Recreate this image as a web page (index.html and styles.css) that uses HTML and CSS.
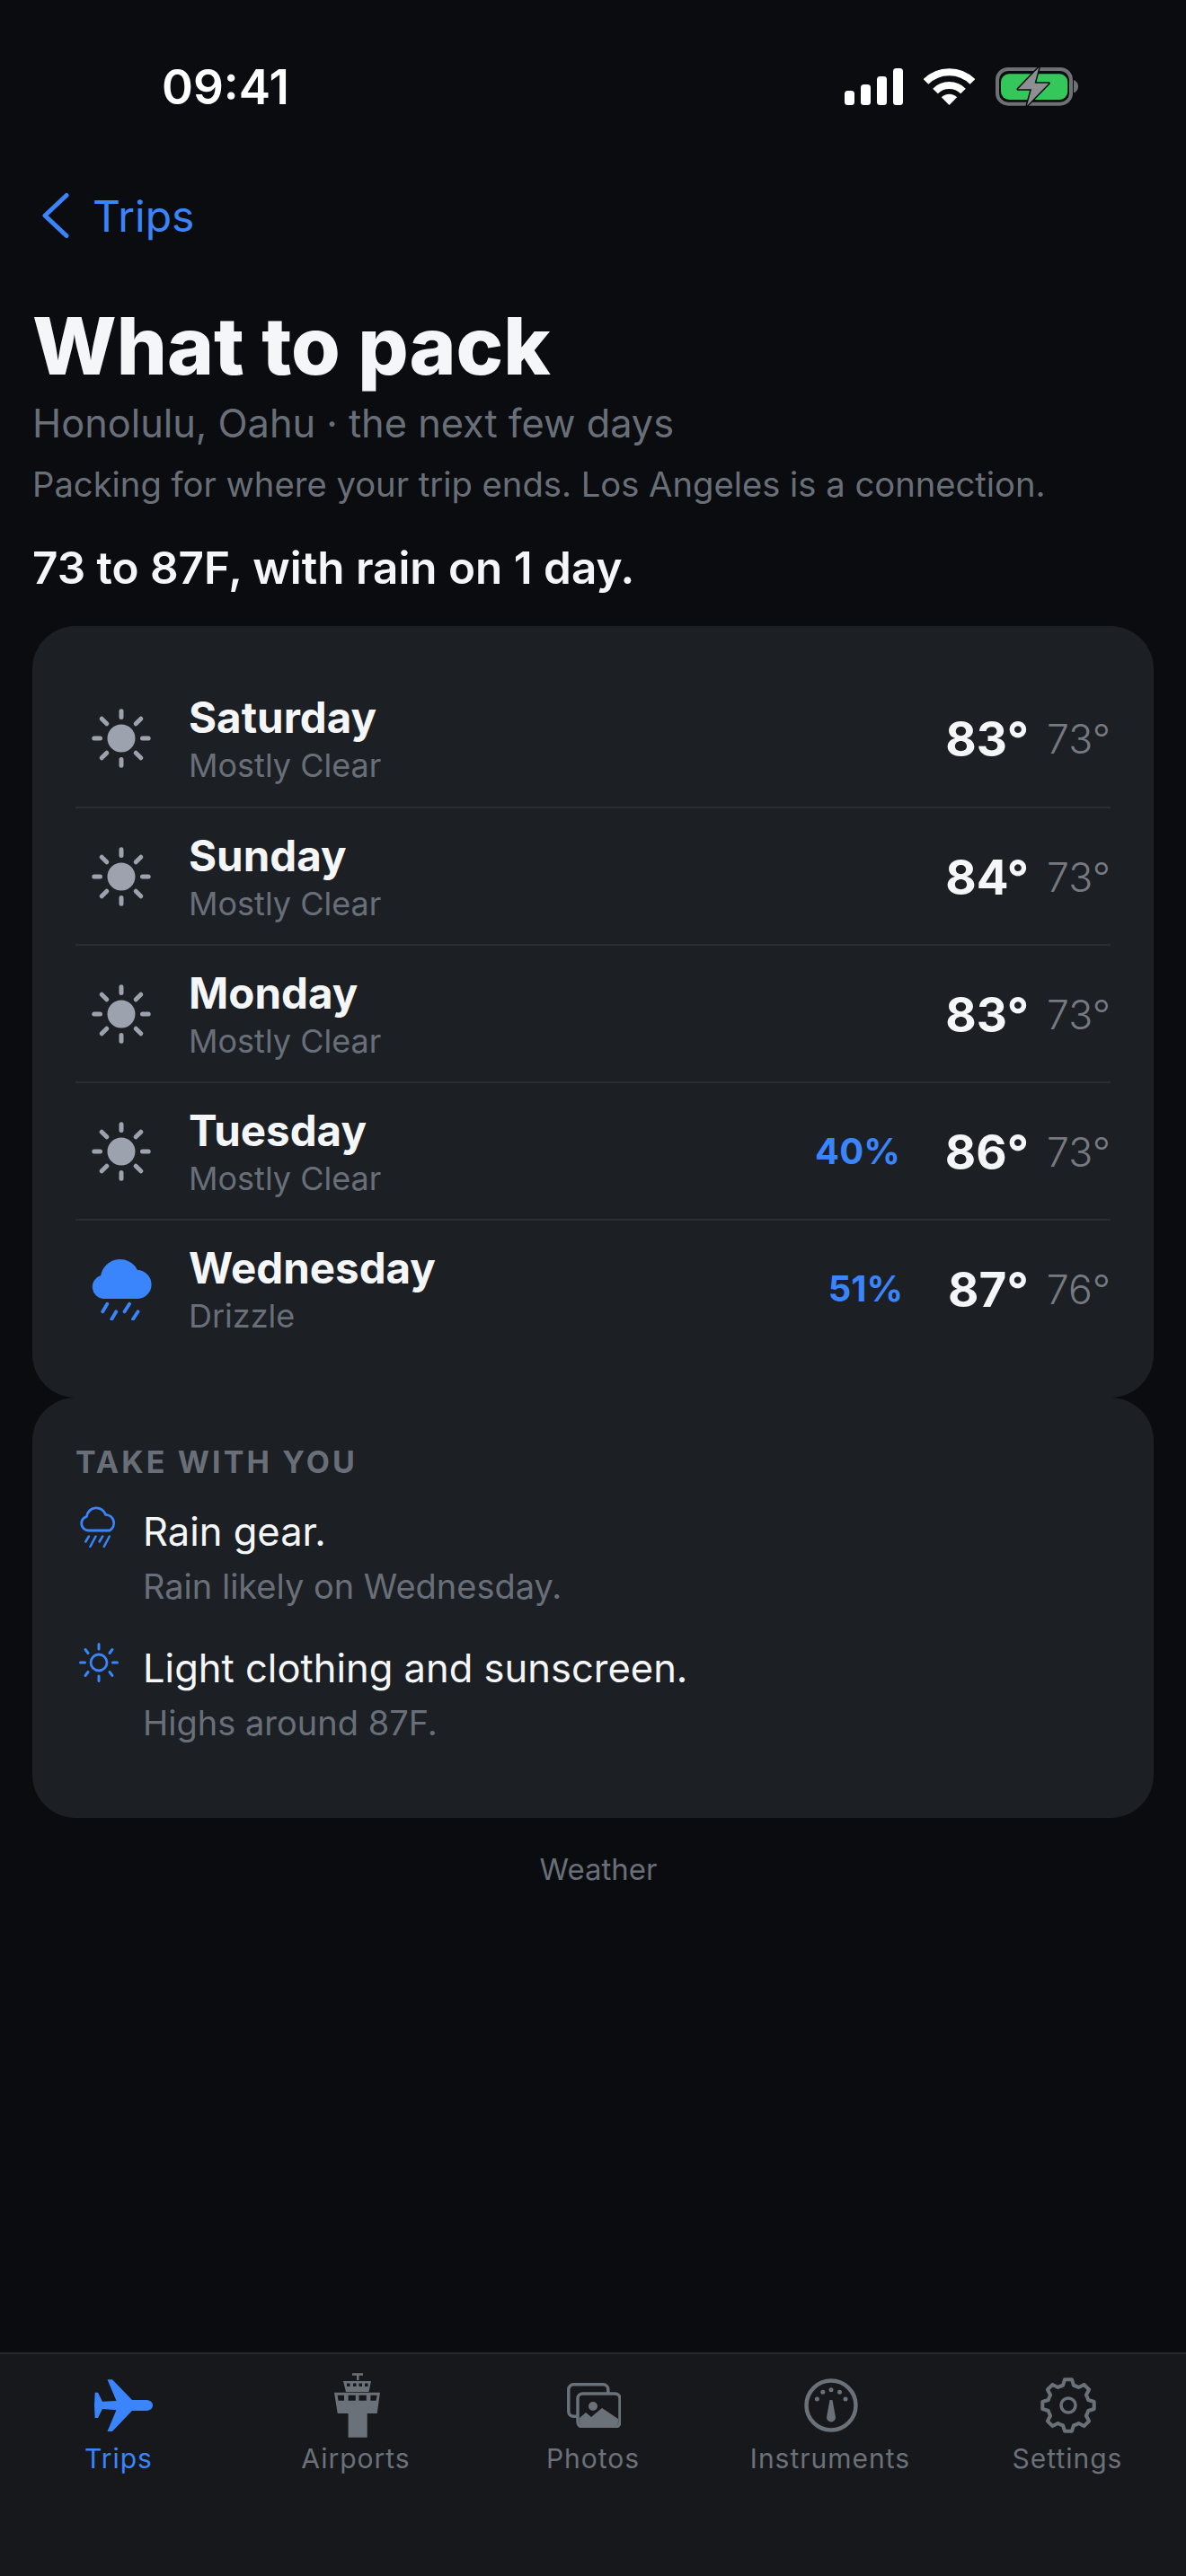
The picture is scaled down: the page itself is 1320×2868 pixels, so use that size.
FILE: index.html
```html
<!DOCTYPE html>
<html lang="en">
<head>
<meta charset="utf-8">
<title>What to pack</title>
<link rel="stylesheet" href="styles.css">
</head>
<body>
<svg class="defs" width="0" height="0" aria-hidden="true">
  <defs>
    <g id="sun">
      <circle cx="33" cy="33" r="15.5" fill="#9ca3af"/>
      <g stroke="#9ca3af" stroke-width="5" stroke-linecap="round">
        <path d="M33 2.800V9.500M33 56.500V63.200M2.800 33H9.500M56.500 33H63.200M11.200 11.200L16.800 16.800M49.200 49.200L54.800 54.800M54.800 11.200L49.200 16.800M16.800 49.200L11.200 54.800"/>
      </g>
    </g>
  </defs>
</svg>
<div class="page">
  <header class="status">
    <span class="time">09:41</span>
    <div class="status-icons">
      <svg class="sig" width="65" height="41" viewBox="0 0 65 41"><rect x="0" y="25" width="11" height="16" rx="3.5"/><rect x="18" y="18" width="11" height="23" rx="3.5"/><rect x="36" y="9" width="11" height="32" rx="3.5"/><rect x="54" y="0" width="11" height="41" rx="3.5"/></svg>
      <svg class="wifi" width="57" height="41" viewBox="0 0 57 41"><path d="M28.5 41L19.8 32.3A12.3 12.3 0 0 1 37.2 32.3Z" fill="#fff"/><path d="M13 25.5A22 22 0 0 1 44 25.5M2.5 15A36.7 36.7 0 0 1 54.5 15" fill="none" stroke="#fff" stroke-width="8"/></svg>
      <svg class="batt" width="92" height="45" viewBox="0 0 92 45"><rect x="2" y="3" width="82" height="38.7" rx="12" fill="none" stroke="#6f7073" stroke-width="4"/><rect x="6" y="8.3" width="74.3" height="28.7" rx="9" fill="#34c759"/><path d="M87 15.3C90 16 92 19 92 22.3S90 28.6 87 29.3Z" fill="#6f7073"/><path d="M48.3 1L25 25.3H40L35 43.7L59.3 18.7H43.6Z" fill="#8e8f92" stroke="#0a0c0f" stroke-width="3" stroke-linejoin="round" paint-order="stroke"/></svg>
    </div>
  </header>
  <a class="back">
    <svg width="30" height="52" viewBox="0 0 30 52"><path d="M27 3.5L3 26L27 48.500" fill="none" stroke="#3a85fb" stroke-width="5" stroke-linecap="round" stroke-linejoin="round"/></svg>
    <span>Trips</span>
  </a>
  <main class="content">
    <h1 class="title">What to pack</h1>
    <p class="place">Honolulu, Oahu · the next few days</p>
    <p class="note">Packing for where your trip ends. Los Angeles is a connection.</p>
    <p class="summary">73 to 87F, with rain on 1 day.</p>
    <section class="card forecast">
      <div class="row">
        <svg class="wx" width="66" height="66" viewBox="0 0 66 66"><use href="#sun"/></svg>
        <div class="day"><div class="name">Saturday</div><div class="cond">Mostly Clear</div></div>
        <span class="hi">83°</span><span class="lo">73°</span>
      </div>
      <div class="row">
        <svg class="wx" width="66" height="66" viewBox="0 0 66 66"><use href="#sun"/></svg>
        <div class="day"><div class="name">Sunday</div><div class="cond">Mostly Clear</div></div>
        <span class="hi">84°</span><span class="lo">73°</span>
      </div>
      <div class="row">
        <svg class="wx" width="66" height="66" viewBox="0 0 66 66"><use href="#sun"/></svg>
        <div class="day"><div class="name">Monday</div><div class="cond">Mostly Clear</div></div>
        <span class="hi">83°</span><span class="lo">73°</span>
      </div>
      <div class="row">
        <svg class="wx" width="66" height="66" viewBox="0 0 66 66"><use href="#sun"/></svg>
        <div class="day"><div class="name">Tuesday</div><div class="cond">Mostly Clear</div></div>
        <span class="pct">40%</span><span class="hi">86°</span><span class="lo">73°</span>
      </div>
      <div class="row">
        <svg class="wx wx-rain" width="70" height="70" viewBox="0 -1 70 70"><path d="M13.3 45A13.3 13.3 0 0 1 10.200 19A21.700 21.700 0 0 1 51 13.100A16 16 0 0 1 52.300 45Z" fill="#3a85fb"/><path d="M17.300 50.700L12.300 59.300M42 50.700L36.600 59.300M27.300 59.300L22.300 67.700M51.600 59.300L46 67.700" stroke="#3a85fb" stroke-width="3.800" stroke-linecap="round"/></svg>
        <div class="day"><div class="name">Wednesday</div><div class="cond">Drizzle</div></div>
        <span class="pct">51%</span><span class="hi">87°</span><span class="lo">76°</span>
      </div>
    </section>
    <section class="card take">
      <h2 class="take-h">TAKE WITH YOU</h2>
      <div class="item">
        <svg class="item-icon" width="44" height="46" viewBox="0 0 44 46"><path d="M10.500 27A8 8 0 0 1 8.500 11.300A10.800 10.800 0 0 1 29.500 9.300A9.500 9.500 0 0 1 34 27Z" fill="none" stroke="#3a85fb" stroke-width="2.800" stroke-linejoin="round"/><path d="M10.900 33.500L7.300 39.500M18.500 33.500L12.400 45M26.200 33.500L22.600 39.500M33.800 33.500L27.700 45" stroke="#3a85fb" stroke-width="2.500" stroke-linecap="round"/></svg>
        <div><div class="item-t">Rain gear.</div><div class="item-s">Rain likely on Wednesday.</div></div>
      </div>
      <div class="item">
        <svg class="item-icon" width="44" height="46" viewBox="0 0 44 46"><circle cx="22" cy="22" r="9" fill="none" stroke="#3a85fb" stroke-width="2.800"/><path d="M22 1.500V7M22 37V42.500M1.500 22H6.500M37.500 22H42.500M7 7.500L10 11.500M37 7.500L34 11.500M7 36.500L10 32.500M37 36.500L34 32.500" stroke="#3a85fb" stroke-width="3" stroke-linecap="round"/></svg>
        <div><div class="item-t">Light clothing and sunscreen.</div><div class="item-s">Highs around 87F.</div></div>
      </div>
    </section>
    <p class="source">Weather</p>
  </main>
  <nav class="tabs">
    <div class="tab active">
      <div class="tab-ico tab-plane"><svg width="65" height="58" viewBox="0 0 65 58"><path d="M65 29C65 32.500 62 35 57 35H42L20 58H14.500L24.500 34.300L9 33L4 43H.7L0 29L.7 14.700H4L9 24.700L24.500 24L14.500 .3H20L42 23H57C62 23 65 25.500 65 29Z" fill="#3a85fb"/></svg></div>
      <span>Trips</span>
    </div>
    <div class="tab">
      <div class="tab-ico"><svg width="51" height="72" viewBox="0 0 51 72"><path fill-rule="evenodd" fill="#6b7178" d="M20 .3H32V2.700H27.500V8H25V2.700H20ZM10 9H41L38.500 21H13ZM14 11.500V15H17.500V11.500ZM21 11.500V15H24.500V11.500ZM27.500 11.500V15H31V11.500ZM34 11.500V15H37.500V11.500ZM0 21.700H51L47.700 45H36.700V71.700H15.600V45H3.700ZM3.700 24.700L4.500 30.700H11V24.700ZM15.600 24.700V30.700H23.800V24.700ZM27.500 24.700V30.700H35.800V24.700ZM40.400 24.700V30.700H46.500L47.700 24.700Z"/></svg></div>
      <span>Airports</span>
    </div>
    <div class="tab">
      <div class="tab-ico"><svg width="60" height="50" viewBox="0 0 60 50"><rect x="1.800" y="1.800" width="44" height="35.500" rx="5.500" fill="none" stroke="#6b7178" stroke-width="3.500"/><rect x="12" y="12" width="47" height="37" rx="5.500" fill="#16181c" stroke="#6b7178" stroke-width="3.500"/><circle cx="29" cy="26" r="5" fill="#6b7178"/><path d="M14 39L21 33L27 38L39 28L57 40V44A4 4 0 0 1 53 48H18A4 4 0 0 1 14 44Z" fill="#6b7178"/></svg></div>
      <span>Photos</span>
    </div>
    <div class="tab">
      <div class="tab-ico"><svg width="60" height="60" viewBox="0 0 60 60"><circle cx="30" cy="30" r="27.500" fill="none" stroke="#6b7178" stroke-width="4.500"/><g fill="#6b7178"><circle cx="14.400" cy="23" r="2.500"/><circle cx="20.800" cy="15.300" r="2.500"/><circle cx="30" cy="12.700" r="2.500"/><circle cx="39.500" cy="15.300" r="2.500"/><circle cx="46" cy="23" r="2.500"/><path d="M28.500 24H31.500L35 43.500A5 5 0 0 1 25 43.500Z"/></g></svg></div>
      <span>Instruments</span>
    </div>
    <div class="tab">
      <div class="tab-ico"><svg width="62" height="62" viewBox="-31 -31 62 62"><path d="M-6-22.200L-4-28.700H4L6-22.200A23 23 0 0 1 11.500-19.900L17.500-23.100L23.100-17.500L19.900-11.500A23 23 0 0 1 22.200-6L28.700-4V4L22.200 6A23 23 0 0 1 19.900 11.500L23.100 17.500L17.500 23.100L11.500 19.900A23 23 0 0 1 6 22.200L4 28.700H-4L-6 22.200A23 23 0 0 1-11.500 19.900L-17.500 23.100L-23.100 17.500L-19.900 11.500A23 23 0 0 1-22.200 6L-28.700 4V-4L-22.200-6A23 23 0 0 1-19.900-11.500L-23.100-17.500L-17.500-23.100L-11.500-19.900A23 23 0 0 1-6-22.200Z" fill="none" stroke="#6b7178" stroke-width="4" stroke-linejoin="round"/><circle r="8" fill="none" stroke="#6b7178" stroke-width="3.500"/></svg></div>
      <span>Settings</span>
    </div>
  </nav>
</div>
</body>
</html>
```
FILE: styles.css
```css
* { box-sizing: border-box; }
html, body { margin: 0; padding: 0; }
body { background: #0a0c0f; color: #f5f6f8; font-family: Inter, "Liberation Sans", sans-serif; }
.defs { position: absolute; }
.page { width: 1320px; height: 2868px; display: flex; flex-direction: column; overflow: hidden; }

.status { height: 192px; padding: 72px 120px 0 180px; display: flex; justify-content: space-between; align-items: flex-start; flex: none; }
.time { font-size: 53px; font-weight: 600; line-height: 50px; color: #fff; }
.status-icons { display: flex; align-items: flex-start; gap: 23px; padding-top: 4px; }
.sig { fill: #fff; }
.batt { margin-top: -2px; }

.back { display: flex; align-items: center; gap: 26px; padding-left: 47px; height: 52px; color: #3a85fb; font-size: 48px; margin-top: 22px; flex: none; }

.content { padding: 0 36px; flex: 1; }
.title { font-size: 88.5px; font-weight: 800; line-height: 100px; margin: 69px 0 0; color: #f5f6f8; }
.place { font-size: 43.3px; line-height: 54px; margin: 9px 0 0; color: #696f78; }
.note { font-size: 38.2px; line-height: 50px; margin: 16px 0 0; color: #696f78; }
.summary { font-size: 49.4px; font-weight: 600; line-height: 60px; margin: 38px 0 0; color: #f5f6f8; }

.card { background: #1c1f24; border-radius: 48px; width: 1248px; }
.forecast { margin-top: 35px; padding: 48px 48px 46px; }
.row { height: 153px; display: flex; align-items: center; border-top: 2px solid #2a2d33; }
.row:first-child { border-top: 0; }
.wx { flex: none; margin-left: 18px; margin-right: 42px; }
.wx-rain { margin-right: 38px; }
.day { flex: 1; padding-top: 2px; }
.name { font-size: 47.5px; font-weight: 700; line-height: 56px; color: #f5f6f8; }
.cond { font-size: 36px; line-height: 46px; margin-top: 2px; color: #696f78; }
.pct { font-size: 40px; font-weight: 700; color: #3a85fb; margin-right: 50px; }
.hi { font-size: 53px; font-weight: 700; padding-top: 2px; color: #f5f6f8; }
.lo { font-size: 44.500px; font-weight: 300; padding-top: 2px; color: #767a80; margin-left: 20px; }

.take { padding: 51px 48px 60px; height: 468px; }
.take-h { font-size: 34px; font-weight: 700; letter-spacing: 3.100px; line-height: 42px; margin: 0; color: #696f78; }
.item { display: flex; gap: 27px; margin-top: 26px; padding-left: 4px; }
.item + .item { margin-top: 31px; }
.item-icon { flex: none; margin-top: 2px; }
.item-t { font-size: 43.5px; line-height: 60px; color: #f5f6f8; }
.item-s { font-size: 38px; line-height: 60px; margin-top: 1px; color: #696f78; }

.source { text-align: center; font-size: 33px; color: #696f78; margin: 37px 0 0; line-height: 40px; padding-left: 12px; }

.tabs { height: 249px; flex: none; display: grid; grid-template-columns: repeat(5, 264px); background: #16181c; border-top: 2px solid #26282d; color: #6b7178; }
.tab { display: flex; flex-direction: column; align-items: center; padding-top: 20px; font-size: 30px; letter-spacing: 1px; }
.tab-ico { height: 74px; display: flex; align-items: center; justify-content: center; position: relative; left: 1px; }
.tab-plane { left: 5px; }
.tab span { margin-top: 2px; line-height: 40px; }
.tab.active { color: #3a85fb; }
```
